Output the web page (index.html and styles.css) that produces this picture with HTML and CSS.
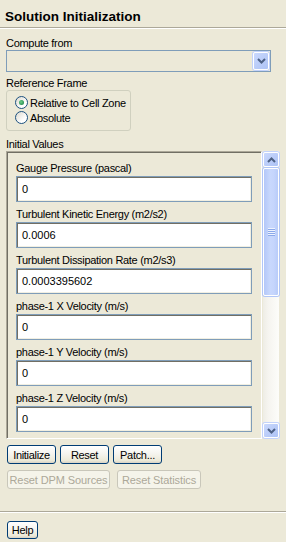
FILE: index.html
```html
<!DOCTYPE html>
<html lang="en">
<head>
    <meta charset="UTF-8">
    <title>Solution Initialization</title>
    <link rel="stylesheet" href="styles.css">
</head>
<body>
    <div class="dialog">
        <h1 class="title">Solution Initialization</h1>
        <div class="rule"></div>

        <div class="section-label first">Compute from</div>
        <div class="combo">
            <span class="scroll-btn combo-btn">
                <svg width="9" height="6" viewBox="0 0 9 6"><polyline points="1,1 4.5,4.5 8,1" fill="none" stroke="#4d6185" stroke-width="2"/></svg>
            </span>
        </div>

        <div class="section-label">Reference Frame</div>
        <div class="group">
            <label class="radio"><span class="radio-dot checked"></span>Relative to Cell Zone</label>
            <label class="radio"><span class="radio-dot"></span>Absolute</label>
        </div>

        <div class="section-label values-title">Initial Values</div>
        <div class="values">
            <div class="values-view">
                <div class="value-label">Gauge Pressure (pascal)</div>
                <div class="value-input">0</div>
                <div class="value-label">Turbulent Kinetic Energy (m2/s2)</div>
                <div class="value-input">0.0006</div>
                <div class="value-label">Turbulent Dissipation Rate (m2/s3)</div>
                <div class="value-input">0.0003395602</div>
                <div class="value-label">phase-1 X Velocity (m/s)</div>
                <div class="value-input">0</div>
                <div class="value-label">phase-1 Y Velocity (m/s)</div>
                <div class="value-input">0</div>
                <div class="value-label">phase-1 Z Velocity (m/s)</div>
                <div class="value-input">0</div>
            </div>
            <div class="scrollbar">
                <span class="scroll-btn">
                    <svg width="9" height="6" viewBox="0 0 9 6"><polyline points="1,5 4.5,1.5 8,5" fill="none" stroke="#4d6185" stroke-width="2"/></svg>
                </span>
                <span class="thumb"><span class="grip"></span></span>
                <span class="track"></span>
                <span class="scroll-btn">
                    <svg width="9" height="6" viewBox="0 0 9 6"><polyline points="1,1 4.5,4.5 8,1" fill="none" stroke="#4d6185" stroke-width="2"/></svg>
                </span>
            </div>
        </div>

        <div class="actions">
            <button class="btn">Initialize</button>
            <button class="btn">Reset</button>
            <button class="btn">Patch...</button>
        </div>
        <div class="actions wide">
            <button class="btn btn-dpm" disabled>Reset DPM Sources</button>
            <button class="btn btn-stats" disabled>Reset Statistics</button>
        </div>

        <div class="rule footer-rule"></div>
        <div class="footer">
            <button class="btn help">Help</button>
        </div>
    </div>
</body>
</html>
```

FILE: styles.css
```css
body {
    margin: 0;
    background: #ece9d8;
    font-family: "Liberation Sans", Arial, sans-serif;
    font-size: 11px;
    letter-spacing: -0.3px;
    color: #000;
}

.dialog {
    width: 286px;
    height: 542px;
    overflow: hidden;
}

.title {
    margin: 0;
    padding: 9px 5px 0;
    height: 18px;
    font-size: 13.5px;
    line-height: 16px;
    font-weight: bold;
    letter-spacing: 0;
}

.rule {
    height: 1px;
    background: #aca899;
    border-bottom: 1px solid #fff;
}

.section-label {
    padding: 0 6px;
    line-height: 14px;
    margin-top: 4px;
}

.section-label.first {
    margin-top: 7px;
}

.values-title {
    margin-top: 7px;
    line-height: 13px;
}

/* disabled combo box */
.combo {
    margin: 0 15px 0 6px;
    height: 20px;
    border: 1px solid #7f9db9;
    display: flex;
    justify-content: flex-end;
    align-items: center;
    padding-right: 1px;
}

.scroll-btn {
    display: flex;
    align-items: center;
    justify-content: center;
    width: 14px;
    height: 13px;
    border: 1px solid #fff;
    border-radius: 2px;
    background: linear-gradient(135deg, #cad9fd, #b8cbf8 60%, #aec4f6);
    box-shadow: 0 0 0 1px #c3d3fb;
}

.combo-btn {
    height: 16px;
}

/* radio group */
.group {
    margin-left: 6px;
    width: 115px;
    border: 1px solid #d0d0bf;
    border-radius: 3px;
    padding: 4px 0 5px 8px;
}

.radio {
    display: flex;
    align-items: center;
    height: 15px;
}

.radio-dot {
    width: 11px;
    height: 11px;
    border: 1px solid #1c5180;
    border-radius: 50%;
    margin-right: 2px;
    background: linear-gradient(135deg, #dcd9ce, #fff 70%);
    display: flex;
    align-items: center;
    justify-content: center;
}

.radio-dot.checked::after {
    content: "";
    width: 5px;
    height: 5px;
    border-radius: 50%;
    background: radial-gradient(circle at 40% 40%, #6fcf8a, #2a9155 70%);
}

/* initial values panel */
.values {
    display: flex;
    margin-left: 6px;
    height: 288px;
}

.values-view {
    width: 245px;
    border-top: 1px solid #aca899;
    border-left: 1px solid #aca899;
    border-right: 1px solid #fff;
    border-bottom: 1px solid #fff;
    box-shadow: inset 1px 1px 0 #716f64;
    padding: 8px 0 0 9px;
    overflow: hidden;
}

.value-label {
    line-height: 16px;
    white-space: nowrap;
}

.value-input {
    width: 229px;
    height: 24px;
    line-height: 24px;
    padding-left: 5px;
    border: 1px solid #7f9db9;
    background: #fff;
    box-shadow: inset 1px 1px 0 #716f64, inset -1px -1px 0 #f1efe2;
    margin-bottom: 4px;
    letter-spacing: 0;
}

.scrollbar {
    display: flex;
    flex-direction: column;
    width: 16px;
    margin-left: 1px;
    padding: 1px 0;
    background: linear-gradient(to right, #eeede5, #f5f4ef 30%, #fdfdfa);
}

.scrollbar .scroll-btn {
    height: 13px;
}

.thumb {
    margin-top: 1px;
    height: 126px;
    border: 1px solid #fff;
    border-radius: 2px;
    box-shadow: 0 0 0 1px #b1c6f7;
    width: 14px;
    background: linear-gradient(to right, #b4c8f8, #c8d8fd 45%, #c5d5fc 70%, #b8ccf9);
    display: flex;
    align-items: center;
    justify-content: center;
}

.grip {
    width: 7px;
    height: 8px;
    background: repeating-linear-gradient(#eef3fe 0 1px, #8ba9ea 1px 2px);
}

.track {
    flex: 1;
}

/* buttons */
.actions {
    display: flex;
    gap: 4px;
    padding: 0 7px;
    margin-top: 6px;
}

.actions.wide {
    gap: 7px;
}

.btn {
    display: inline-flex;
    align-items: center;
    justify-content: center;
    min-width: 49px;
    height: 19px;
    padding: 0 4px;
    font-family: inherit;
    font-size: 11px;
    letter-spacing: -0.3px;
    color: #000;
    border: 1px solid #003c74;
    border-radius: 3px;
    background: linear-gradient(#fff, #f5f4ef 45%, #ece9d8 85%, #d8d2c5);
}

.btn:disabled {
    color: #aca899;
    border-color: #c9c7ba;
    background: #f5f4ea;
    letter-spacing: -0.1px;
    padding: 0;
}

.btn-dpm {
    width: 103px;
}

.btn-stats {
    width: 84px;
}

.footer-rule {
    margin-top: 22px;
}

.footer {
    padding: 8px 7px 0;
}

.btn.help {
    min-width: 31px;
    height: 18px;
    padding: 0 3px;
}
```
